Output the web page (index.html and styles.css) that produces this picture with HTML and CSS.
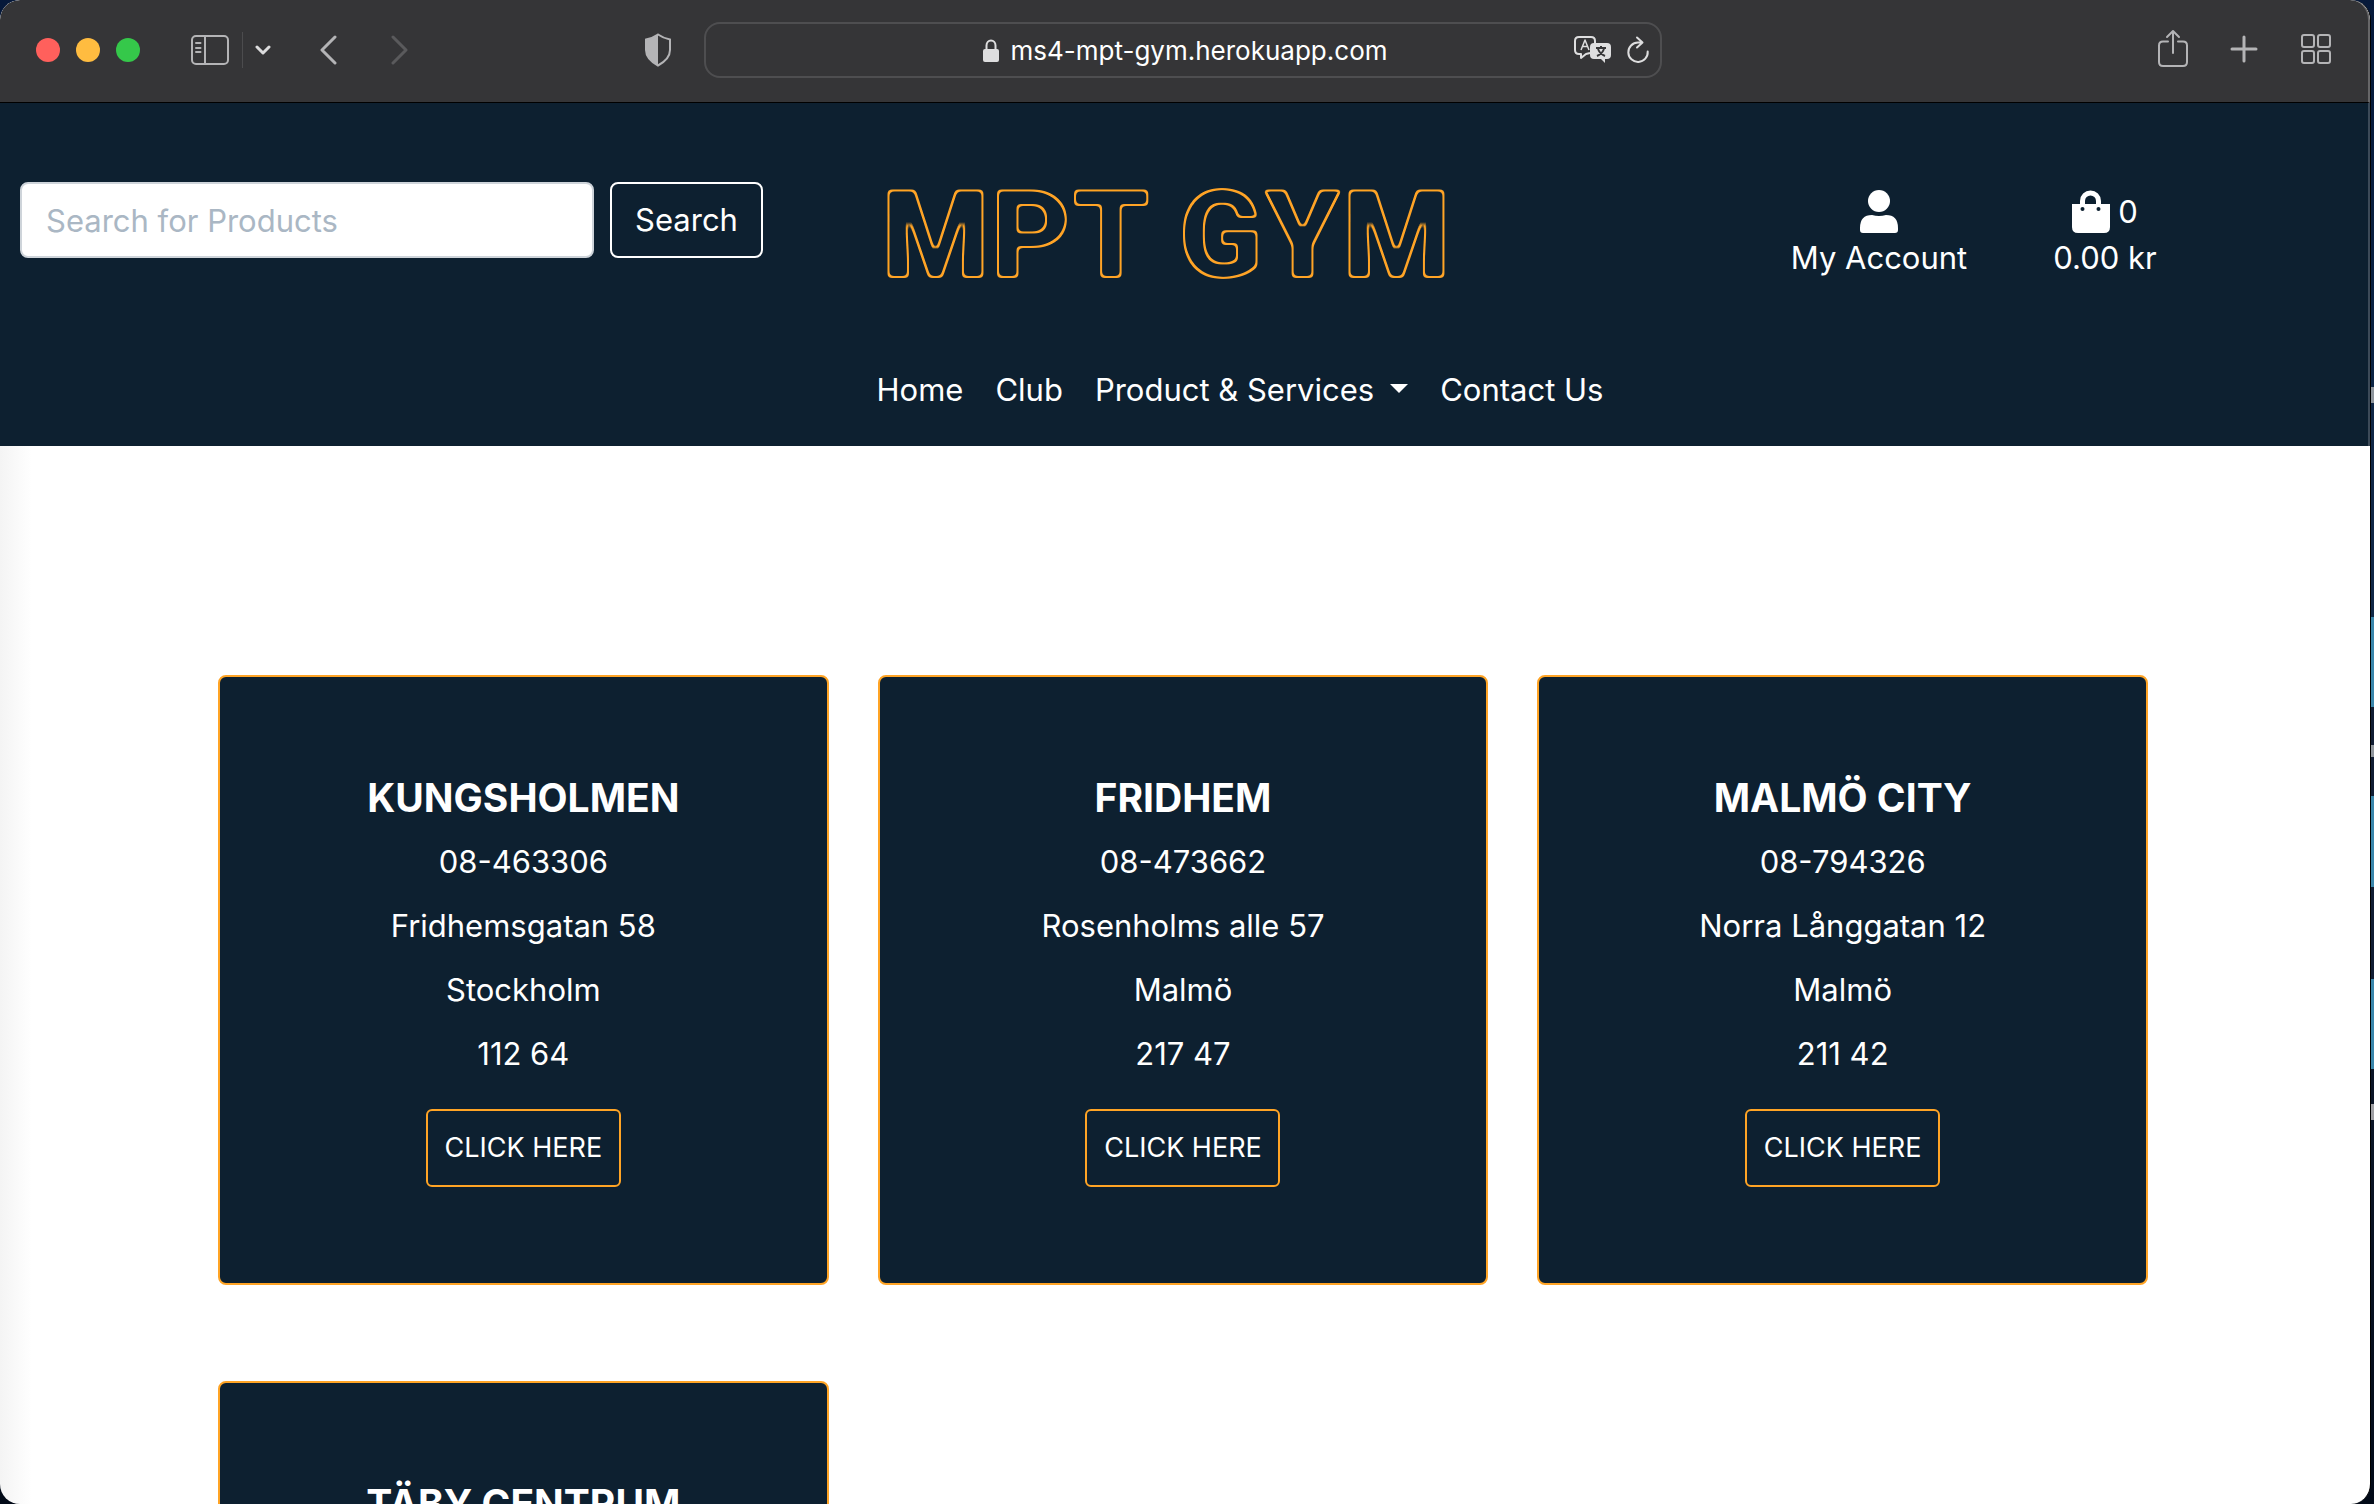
FILE: index.html
```html
<!DOCTYPE html>
<html lang="en">
<head>
  <meta charset="utf-8">
  <title>MPT GYM</title>
  <link rel="stylesheet" href="styles.css">
</head>
<body>
  <!-- Turns solid lettering into a rounded outline -->
  <svg class="filters" width="0" height="0" aria-hidden="true">
    <filter id="neon" x="0" y="0" width="100%" height="100%">
      <feGaussianBlur in="SourceGraphic" stdDeviation="2" result="soft"/>
      <feComponentTransfer in="soft" result="round"><feFuncA type="linear" slope="6" intercept="-2.500"/></feComponentTransfer>
      <feMorphology in="round" operator="erode" radius="2" result="inner"/>
      <feComposite in="round" in2="inner" operator="out"/>
    </filter>
  </svg>
  <div class="window">
    <div class="toolbar">
      <div class="toolbar-side">
        <div class="lights">
          <span class="light light-close"></span>
          <span class="light light-minimise"></span>
          <span class="light light-zoom"></span>
        </div>
        <div class="sidebar-tools">
          <button class="tool" aria-label="Sidebar">
            <svg width="40" height="32" viewBox="0 0 40 32" fill="none" stroke="#b4b4b6" stroke-width="2"><rect x="2" y="2" width="36" height="28" rx="4"/><path d="M15 2v28M6 9h4.500M6 14h4.500M6 18h4.500" stroke-linecap="round"/></svg>
          </button>
          <span class="divider"></span>
          <button class="tool" aria-label="Tab groups">
            <svg width="16" height="12" viewBox="0 0 16 12" fill="none" stroke="#dcdcdd" stroke-width="3" stroke-linecap="round" stroke-linejoin="round"><path d="M2 3l6 6 6-6"/></svg>
          </button>
        </div>
        <div class="history">
          <button class="tool" aria-label="Back">
            <svg width="18" height="30" viewBox="0 0 18 30" fill="none" stroke="#b4b4b6" stroke-width="3" stroke-linecap="round" stroke-linejoin="round"><path d="M16 2L3 15l13 13"/></svg>
          </button>
          <button class="tool" aria-label="Forward">
            <svg width="18" height="30" viewBox="0 0 18 30" fill="none" stroke="#5a5a5c" stroke-width="3" stroke-linecap="round" stroke-linejoin="round"><path d="M2 2l13 13L2 28"/></svg>
          </button>
        </div>
        <button class="tool shield" aria-label="Privacy report">
          <svg width="28" height="34" viewBox="0 0 28 34"><path d="M14 1.500Q19 5 26 6.500V17q0 9-12 15.500Q2 26 2 17V6.500Q9 5 14 1.500z" fill="none" stroke="#b4b4b6" stroke-width="2"/><path d="M14 1.500V32.500Q2 26 2 17V6.500Q9 5 14 1.500z" fill="#b4b4b6"/></svg>
        </button>
      </div>
      <div class="address">
        <span class="address-text">
          <svg width="16" height="24" viewBox="0 0 16 24"><path d="M3.500 11V6.500a4.500 5 0 0 1 9 0V11" fill="none" stroke="#dededf" stroke-width="2"/><rect x="0" y="10" width="16" height="13" rx="2" fill="#dededf"/></svg>
          ms4-mpt-gym.herokuapp.com
        </span>
        <span class="address-tools">
          <button class="tool" aria-label="Translate">
            <svg width="38" height="28" viewBox="0 0 38 28" fill="none" stroke="#dededf" stroke-width="2" stroke-linejoin="round"><path d="M16 17l-4 1-5 4v-4H5q-4 0-4-4V5q0-4 4-4h12q4 0 4 4v2"/><path d="M7 14l4-10 4 10M8.500 10.500h5" stroke-width="1.500"/><path d="M20 7h13q4 0 4 4v8q0 4-4 4h-2v4l-4-4h-7q-4 0-4-4v-8q0-4 4-4z" fill="#dededf" stroke="none"/><path d="M22 12h10M27 10v2M24 13q2 5 7 7M30 13q-2 5-7 7" stroke="#353537"/></svg>
          </button>
          <button class="tool" aria-label="Reload">
            <svg width="24" height="28" viewBox="0 0 24 28" fill="none" stroke="#dededf" stroke-width="2" stroke-linecap="round" stroke-linejoin="round"><path d="M16 6.500h-4a9.700 9.700 0 1 0 9.700 9M11 1.500l5.500 5-5.500 5"/></svg>
          </button>
        </span>
      </div>
      <div class="toolbar-actions">
        <button class="tool" aria-label="Share">
          <svg width="30" height="42" viewBox="0 0 30 42" fill="none" stroke="#b4b4b6" stroke-width="2" stroke-linecap="round" stroke-linejoin="round"><path d="M10 12.500H5q-4 0-4 4V33q0 4 4 4h20q4 0 4-4V16.500q0-4-4-4h-5M15 24V2M9 8l6-6 6 6"/></svg>
        </button>
        <button class="tool" aria-label="New tab">
          <svg width="28" height="30" viewBox="0 0 28 30" fill="none" stroke="#b4b4b6" stroke-width="3" stroke-linecap="round"><path d="M14 2v24M2 14h24"/></svg>
        </button>
        <button class="tool" aria-label="Tab overview">
          <svg width="32" height="34" viewBox="0 0 32 34" fill="none" stroke="#b4b4b6" stroke-width="2"><rect x="2" y="2" width="12" height="12" rx="2"/><rect x="18" y="2" width="12" height="12" rx="2"/><rect x="2" y="18" width="12" height="12" rx="2"/><rect x="18" y="18" width="12" height="12" rx="2"/></svg>
        </button>
      </div>
    </div>

    <header class="site-header">
      <div class="header-row">
        <form class="search">
          <input class="search-input" type="search" placeholder="Search for Products" aria-label="Search for Products">
          <button class="search-button" type="button">Search</button>
        </form>
        <a class="logo" href="#">MPT GYM</a>
        <div class="account-links">
          <a class="account-link" href="#">
            <svg class="account-icon" viewBox="0 0 38 44" fill="#fff"><circle cx="19" cy="11" r="11"/><path d="M12 25q7 2 14 0 12 0 12 13v2q0 3-3 3H3q-3 0-3-3v-2Q0 25 12 25z"/></svg>
            <span>My Account</span>
          </a>
          <a class="account-link" href="#">
            <span class="bag">
              <svg class="account-icon" viewBox="0 0 38 44"><path d="M10.500 15v-4a8 8 0 0 1 16 0v4" fill="none" stroke="#fff" stroke-width="5"/><path d="M0 14h38v23q0 6-6 6H6q-6 0-6-6z" fill="#fff"/><circle cx="10.500" cy="19" r="2" fill="#0d2030"/><circle cx="26.500" cy="19" r="2" fill="#0d2030"/></svg>
              0
            </span>
            <span>0.00 kr</span>
          </a>
        </div>
      </div>
      <nav class="nav">
        <a href="#">Home</a>
        <a href="#">Club</a>
        <a class="dropdown" href="#">Product &amp; Services</a>
        <a href="#">Contact Us</a>
      </nav>
    </header>

    <main class="clubs">
      <article class="club">
        <h2>KUNGSHOLMEN</h2>
        <p>08-463306</p>
        <p>Fridhemsgatan 58</p>
        <p>Stockholm</p>
        <p>112 64</p>
        <button class="club-button">CLICK HERE</button>
      </article>
      <article class="club">
        <h2>FRIDHEM</h2>
        <p>08-473662</p>
        <p>Rosenholms alle 57</p>
        <p>Malmö</p>
        <p>217 47</p>
        <button class="club-button">CLICK HERE</button>
      </article>
      <article class="club">
        <h2>MALMÖ CITY</h2>
        <p>08-794326</p>
        <p>Norra Långgatan 12</p>
        <p>Malmö</p>
        <p>211 42</p>
        <button class="club-button">CLICK HERE</button>
      </article>
      <article class="club">
        <h2>TÄBY CENTRUM</h2>
      </article>
    </main>
  </div>
</body>
</html>
```
FILE: styles.css
```css
* {
  box-sizing: border-box;
}

:root {
  --navy: #0d2030;
  --orange: #ffa425;
}

html {
  height: 100%;
  overflow: hidden;
}

/* Desktop wallpaper, visible beside the window */
body {
  height: 100%;
  margin: 0;
  padding-right: 3px;
  overflow: hidden;
  font-family: Inter, "Liberation Sans", sans-serif;
  font-size: 31px;
  line-height: 48px;
  color: #fff;
  background: linear-gradient(
    #06193a 0, #0c2444 387px, #8f959c 387px, #8f959c 403px,
    #102746 403px, #102746 617px, #3a86ab 617px, #3a86ab 707px,
    #101c33 707px, #101c33 745px, #8f959c 745px, #8f959c 757px,
    #101c33 757px, #101c33 796px, #3a86ab 796px, #3a86ab 887px,
    #101c33 887px, #101c33 979px, #3a86ab 979px, #3a86ab 1069px,
    #0b1526 1069px, #0b1526 1104px, #a0a0a4 1104px, #a0a0a4 1120px,
    #0b1526 1120px, #020a18 100%);
}

button,
input {
  font: inherit;
}

a {
  color: inherit;
  text-decoration: none;
}

svg {
  display: block;
}

.filters {
  position: absolute;
}

.window {
  height: 100%;
  overflow: hidden;
  background: linear-gradient(to right, #f4f4f4, #fff 32px);
  border-right: 1px solid #000;
  border-radius: 20px;
}

/* Browser toolbar */
.toolbar {
  display: grid;
  grid-template-columns: 704px 958px 1fr;
  height: 103px;
  padding-bottom: 2px;
  background: #353537;
  border-bottom: 1px solid #000;
  border-right: 2px solid #666668;
  border-radius: 20px 20px 0 0;
  align-items: center;
}

.tool {
  padding: 0;
  border: 0;
  background: none;
}

.toolbar-side,
.lights,
.sidebar-tools,
.history,
.toolbar-actions,
.address,
.address-text,
.address-tools {
  display: flex;
  align-items: center;
}

.toolbar-side {
  padding: 0 32px 0 36px;
}

.lights {
  gap: 16px;
}

.light {
  width: 24px;
  height: 24px;
  border-radius: 50%;
}

.light-close {
  background: #ff605c;
}

.light-minimise {
  background: #ffbc40;
}

.light-zoom {
  background: #35c84a;
}

.sidebar-tools {
  gap: 12px;
  margin-left: 50px;
}

.divider {
  width: 1px;
  height: 36px;
  background: #4c4c4e;
}

.history {
  gap: 54px;
  margin-left: 48px;
}

.shield {
  margin-left: auto;
}

.address {
  position: relative;
  height: 56px;
  justify-content: center;
  border: 2px solid #4e4e50;
  border-radius: 16px;
}

.address-text {
  gap: 12px;
  padding: 2px 0 0 4px;
  font-size: 26px;
}

.address-tools {
  position: absolute;
  right: 10px;
  gap: 14px;
}

.toolbar-actions {
  gap: 42px;
  justify-content: flex-end;
  padding-right: 36px;
}

/* Site header */
.site-header {
  height: 343px;
  padding-top: 79px;
  background: var(--navy);
  border-right: 2px solid #3c4a58;
}

.header-row {
  display: grid;
  grid-template-columns: repeat(3, 1fr);
  height: 184px;
  align-items: start;
}

.search {
  display: flex;
  gap: 16px;
  padding: 0 26px 0 20px;
}

.search-input {
  width: 574px;
  height: 76px;
  padding: 0 24px;
  border: 2px solid #ced4da;
  border-radius: 8px;
  background: #fff;
}

.search-input::placeholder {
  color: #aab7c4;
}

.search-button {
  width: 153px;
  height: 76px;
  padding: 0;
  border: 2px solid #fff;
  border-radius: 8px;
  background: none;
  color: #fff;
}

.logo {
  padding-right: 36px;
  font-family: Roboto, sans-serif;
  font-size: 125px;
  font-weight: 900;
  line-height: 108px;
  text-align: center;
  white-space: nowrap;
  color: var(--orange);
  filter: url(#neon);
}

.account-links {
  display: flex;
  justify-content: flex-end;
  padding-right: 150px;
}

.account-link {
  display: flex;
  flex-direction: column;
  width: 226px;
  padding-top: 8px;
  align-items: center;
}

.account-icon {
  width: 38px;
  height: 44px;
}

.bag {
  display: flex;
  height: 44px;
  gap: 8px;
  align-items: center;
}

.nav {
  display: flex;
  gap: 32px;
  justify-content: center;
  padding-left: 112px;
}

.dropdown::after {
  content: "";
  display: inline-block;
  margin-left: 16px;
  border: 9px solid transparent;
  border-top-color: #fff;
  border-bottom: 0;
  vertical-align: 8px;
}

/* Club cards */
.clubs {
  display: grid;
  grid-template-columns: repeat(3, 1fr);
  gap: 96px 49px;
  padding: 229px 222px 0 218px;
}

.club {
  height: 610px;
  padding-top: 97px;
  border: 2px solid var(--orange);
  border-radius: 8px;
  background: var(--navy);
  text-align: center;
}

.club h2 {
  margin: 0 0 16px;
  font-size: 39px;
  font-weight: 700;
  line-height: 48px;
}

.club p {
  margin: 0 0 16px;
}

.club-button {
  width: 195px;
  height: 78px;
  margin-top: 15px;
  padding: 0;
  border: 2px solid var(--orange);
  border-radius: 6px;
  background: none;
  color: #fff;
  font-size: 27px;
}
```
